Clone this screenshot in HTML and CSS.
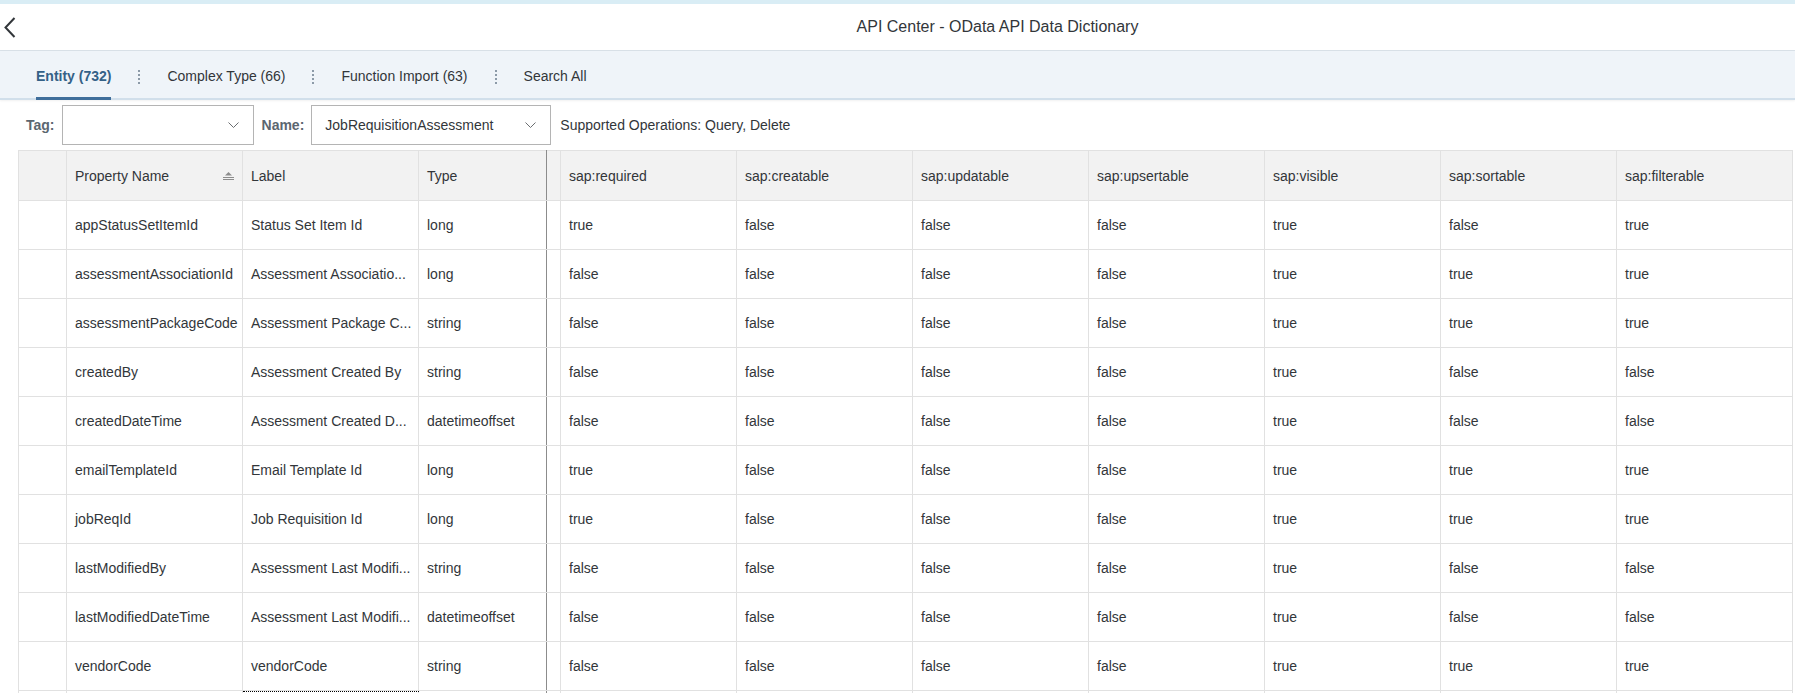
FILE: index.html
```html
<!DOCTYPE html>
<html lang="en">
<head>
    <meta charset="UTF-8">
    <meta name="viewport" content="width=device-width, initial-scale=1.0">
    <title>API Center - OData API Data Dictionary</title>
    <link rel="stylesheet" href="styles.css">
</head>
<body>
    <div class="top-strip"></div>
    <header class="shell-bar">
        <button class="back-button" aria-label="Back">
            <svg width="12" height="21" viewBox="0 0 12 21"><polyline points="10.5,1 1.5,10.5 10.5,20" fill="none" stroke="#32363a" stroke-width="2"/></svg>
        </button>
        <h1 class="title">API Center - OData API Data Dictionary</h1>
    </header>

    <nav class="tabs">
        <a class="tab active">Entity (732)</a>
        <span class="tab-sep"></span>
        <a class="tab">Complex Type (66)</a>
        <span class="tab-sep"></span>
        <a class="tab">Function Import (63)</a>
        <span class="tab-sep"></span>
        <a class="tab">Search All</a>
    </nav>

    <div class="filters">
        <label class="filter-label">Tag:</label>
        <div class="select tag-select">
            <span></span>
            <svg class="chevron" width="11" height="6" viewBox="0 0 11 6"><polyline points="0.5,0.5 5.5,5.5 10.5,0.5" fill="none" stroke="#6a6d70" stroke-width="1"/></svg>
        </div>
        <label class="filter-label name-label">Name:</label>
        <div class="select name-select">
            <span>JobRequisitionAssessment</span>
            <svg class="chevron" width="11" height="6" viewBox="0 0 11 6"><polyline points="0.5,0.5 5.5,5.5 10.5,0.5" fill="none" stroke="#6a6d70" stroke-width="1"/></svg>
        </div>
        <span class="operations">Supported Operations: Query, Delete</span>
    </div>

    <div class="table-wrap">
        <table class="grid">
            <colgroup>
                <col class="c-sel">
                <col class="c-wide">
                <col class="c-wide">
                <col class="c-type">
                <col class="c-gap">
                <col class="c-wide">
                <col class="c-wide">
                <col class="c-wide">
                <col class="c-wide">
                <col class="c-wide">
                <col class="c-wide">
                <col class="c-wide">
            </colgroup>
            <thead>
                <tr>
                    <th></th>
                    <th>
                        <div class="sort-head">
                            <span>Property Name</span>
                            <svg width="11" height="8" viewBox="0 0 11 8"><polygon points="5.5,0 9,3.5 2,3.5" fill="#8c8c8c"/><rect x="0" y="5" width="11" height="1" fill="#8c8c8c"/><rect x="0" y="7" width="11" height="1" fill="#8c8c8c"/></svg>
                        </div>
                    </th>
                    <th>Label</th>
                    <th class="fix-end">Type</th>
                    <th></th>
                    <th>sap:required</th>
                    <th>sap:creatable</th>
                    <th>sap:updatable</th>
                    <th>sap:upsertable</th>
                    <th>sap:visible</th>
                    <th>sap:sortable</th>
                    <th>sap:filterable</th>
                </tr>
            </thead>
            <tbody>
                <tr><td></td><td>appStatusSetItemId</td><td>Status Set Item Id</td><td class="fix-end">long</td><td></td><td>true</td><td>false</td><td>false</td><td>false</td><td>true</td><td>false</td><td>true</td></tr>
                <tr><td></td><td>assessmentAssociationId</td><td>Assessment Associatio...</td><td class="fix-end">long</td><td></td><td>false</td><td>false</td><td>false</td><td>false</td><td>true</td><td>true</td><td>true</td></tr>
                <tr><td></td><td>assessmentPackageCode</td><td>Assessment Package C...</td><td class="fix-end">string</td><td></td><td>false</td><td>false</td><td>false</td><td>false</td><td>true</td><td>true</td><td>true</td></tr>
                <tr><td></td><td>createdBy</td><td>Assessment Created By</td><td class="fix-end">string</td><td></td><td>false</td><td>false</td><td>false</td><td>false</td><td>true</td><td>false</td><td>false</td></tr>
                <tr><td></td><td>createdDateTime</td><td>Assessment Created D...</td><td class="fix-end">datetimeoffset</td><td></td><td>false</td><td>false</td><td>false</td><td>false</td><td>true</td><td>false</td><td>false</td></tr>
                <tr><td></td><td>emailTemplateId</td><td>Email Template Id</td><td class="fix-end">long</td><td></td><td>true</td><td>false</td><td>false</td><td>false</td><td>true</td><td>true</td><td>true</td></tr>
                <tr><td></td><td>jobReqId</td><td>Job Requisition Id</td><td class="fix-end">long</td><td></td><td>true</td><td>false</td><td>false</td><td>false</td><td>true</td><td>true</td><td>true</td></tr>
                <tr><td></td><td>lastModifiedBy</td><td>Assessment Last Modifi...</td><td class="fix-end">string</td><td></td><td>false</td><td>false</td><td>false</td><td>false</td><td>true</td><td>false</td><td>false</td></tr>
                <tr><td></td><td>lastModifiedDateTime</td><td>Assessment Last Modifi...</td><td class="fix-end">datetimeoffset</td><td></td><td>false</td><td>false</td><td>false</td><td>false</td><td>true</td><td>false</td><td>false</td></tr>
                <tr><td></td><td>vendorCode</td><td>vendorCode</td><td class="fix-end">string</td><td></td><td>false</td><td>false</td><td>false</td><td>false</td><td>true</td><td>true</td><td>true</td></tr>
                <tr><td></td><td></td><td class="focused"></td><td class="fix-end"></td><td></td><td></td><td></td><td></td><td></td><td></td><td></td><td></td></tr>
            </tbody>
        </table>
    </div>
</body>
</html>
```

FILE: styles.css
```css
body {
    margin: 0;
    font-family: 'Liberation Sans', Arial, sans-serif;
    font-size: 14px;
    color: #32363a;
    background-color: #fff;
    height: 693px;
    overflow: hidden;
}

.top-strip {
    height: 4px;
    background-color: #d9edf5;
}

.shell-bar {
    display: flex;
    align-items: center;
    height: 46px;
    border-bottom: 1px solid #d9e1e8;
    background-color: #fff;
}

.back-button {
    display: flex;
    align-items: center;
    border: none;
    background: none;
    padding: 0 0 0 4px;
    width: 20px;
    height: 46px;
    cursor: pointer;
}

.title {
    flex: 1;
    margin: 0;
    padding-left: 180px;
    text-align: center;
    font-size: 16px;
    font-weight: normal;
    color: #32363a;
}

.tabs {
    display: flex;
    align-items: stretch;
    height: 47px;
    padding-left: 36px;
    background-color: #eff4f9;
    border-bottom: 2px solid #d1dfeb;
    box-shadow: 0 1px 2px rgba(0, 0, 0, 0.06);
}

.tab {
    display: flex;
    align-items: center;
    padding-top: 4px;
    margin-bottom: -2px;
    border-bottom: 3px solid transparent;
    color: #32363a;
    cursor: pointer;
}

.tab.active {
    font-weight: bold;
    color: #346187;
    border-bottom-color: #3f6e9b;
}

.tab-sep {
    align-self: center;
    margin: 4px 27px 0;
    height: 14px;
    border-left: 2px dotted #8c9aa8;
}

.filters {
    display: flex;
    align-items: center;
    height: 50px;
    padding-left: 26px;
}

.filter-label {
    font-weight: bold;
    color: #5b6670;
    margin-right: 7px;
}

.name-label {
    margin-left: 8px;
}

.select {
    display: flex;
    align-items: center;
    justify-content: space-between;
    box-sizing: border-box;
    height: 40px;
    padding: 0 14px 0 13px;
    border: 1px solid #b4b4b4;
    background-color: #fff;
}

.tag-select {
    width: 192px;
}

.name-select {
    width: 240px;
}

.operations {
    margin-left: 9px;
}

.table-wrap {
    padding-left: 18px;
}

.grid {
    table-layout: fixed;
    border-collapse: collapse;
    width: 1775px;
}

.c-sel { width: 48px; }
.c-wide { width: 176px; }
.c-type { width: 128px; }
.c-gap { width: 14px; }

.grid th,
.grid td {
    border: 1px solid #e1e1e1;
    padding: 0 8px;
    text-align: left;
    white-space: nowrap;
    overflow: hidden;
}

.grid th {
    height: 49px;
    font-weight: normal;
    background-color: #f2f2f2;
}

.grid td {
    height: 48px;
}

.grid .fix-end {
    border-right: 1px solid #8c8c8c;
}

.sort-head {
    display: flex;
    align-items: center;
    justify-content: space-between;
}

.focused {
    outline: 1px dotted #000;
    outline-offset: -1px;
}
```
